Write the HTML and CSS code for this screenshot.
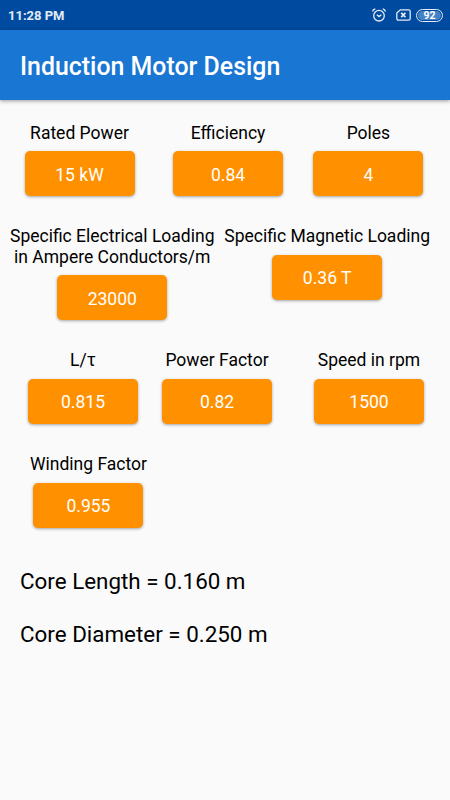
FILE: index.html
```html
<!DOCTYPE html>
<html lang="en">
<head>
  <meta charset="UTF-8">
  <meta name="viewport" content="width=device-width, initial-scale=1">
  <title>Induction Motor Design</title>
  <link rel="stylesheet" href="styles.css">
</head>
<body>
  <div class="status-bar">
    <span class="clock">11:28 PM</span>
    <div class="status-icons">
      <svg class="alarm" width="16" height="16" viewBox="0 0 16 16">
        <circle cx="8" cy="8.7" r="5.3"/>
        <path d="M5.800 7.700L8 9.600l2.400-1.900M1.500 4.500Q2 2.500 4.300 1.900M14.500 4.500Q14 2.500 11.700 1.900"/>
      </svg>
      <svg class="sim" width="15" height="12" viewBox="0 0 15 12">
        <path d="M4.300.8h8.300c.9 0 1.600.7 1.600 1.600v7.200c0 .9-.7 1.600-1.600 1.600H2.400c-.9 0-1.600-.7-1.600-1.600V4z"/>
        <path class="cross" d="M5.200 3.900l4.200 4.200M9.400 3.900L5.200 8.100"/>
      </svg>
      <span class="battery">92</span>
    </div>
  </div>
  <header class="app-bar">
    <h1>Induction Motor Design</h1>
  </header>
  <main>
    <div class="row row-basic">
      <div class="field"><label>Rated Power</label><button>15 kW</button></div>
      <div class="field"><label>Efficiency</label><button>0.84</button></div>
      <div class="field"><label>Poles</label><button>4</button></div>
    </div>
    <div class="row row-loading">
      <div class="field"><label>Specific Electrical Loading<br>in Ampere Conductors/m</label><button>23000</button></div>
      <div class="field"><label>Specific Magnetic Loading</label><button>0.36 T</button></div>
    </div>
    <div class="row row-factors">
      <div class="field"><label>L/τ</label><button>0.815</button></div>
      <div class="field"><label>Power Factor</label><button>0.82</button></div>
      <div class="field"><label>Speed in rpm</label><button>1500</button></div>
    </div>
    <div class="row row-winding">
      <div class="field"><label>Winding Factor</label><button>0.955</button></div>
    </div>
    <div class="results">
      <p>Core Length = 0.160 m</p>
      <p>Core Diameter = 0.250 m</p>
    </div>
  </main>
</body>
</html>
```
FILE: styles.css
```css
* {
  box-sizing: border-box;
}
body {
  margin: 0;
  height: 800px;
  overflow: hidden;
  background: #fafafa;
  color: #000;
  font-family: Roboto, sans-serif;
}
.status-bar {
  height: 30px;
  padding: 0 7px 0 8px;
  display: flex;
  align-items: center;
  justify-content: space-between;
  background: #004ba0;
  color: #e3ebf5;
}
.clock {
  font-size: 13px;
  font-weight: 700;
}
.status-icons {
  display: flex;
  align-items: center;
}
.status-icons svg {
  fill: none;
  stroke: #e3ebf5;
  stroke-width: 1.3;
}
.status-icons .cross {
  stroke-width: 1.7;
}
.sim {
  margin: 0 5px 0 9px;
}
.battery {
  width: 27px;
  height: 13px;
  padding: 1px;
  border: 1.5px solid #e3ebf5;
  border-radius: 7px;
  background: #4382c6 content-box;
  color: #fff;
  font-size: 10.5px;
  font-weight: 700;
  line-height: 9px;
  text-align: center;
}
.app-bar {
  height: 70px;
  padding-left: 20px;
  display: flex;
  align-items: center;
  background: #1976d2;
  color: #fff;
  box-shadow: 0 1px 4px rgba(0,0,0,0.4);
}
h1 {
  margin: 2px 0 0;
  font-size: 24.9px;
  font-weight: 500;
}
.row {
  display: flex;
  align-items: flex-start;
}
.field {
  display: flex;
  flex-direction: column;
  align-items: center;
}
label {
  font-size: 17.5px;
  line-height: 20.5px;
  text-align: center;
  white-space: nowrap;
}
button {
  width: 110px;
  height: 45px;
  margin-top: 7.9px;
  padding: 2px 0 0;
  border: 0;
  border-radius: 5px;
  background: #ff9100;
  color: #fff;
  font-family: inherit;
  font-size: 17.5px;
  box-shadow: 0 1px 3px rgba(0,0,0,0.35);
}
.row-basic {
  padding: 23px 0 0 24.5px;
}
.row-basic .field + .field {
  margin-left: 38.5px;
}
.row-basic .field:last-child {
  margin-left: 30.4px;
}
.row-loading {
  margin-top: 30.1px;
  padding: 0 20px 0 10px;
  justify-content: space-between;
}
.row-factors {
  margin-top: 30.1px;
  padding: 0 26px 0 28px;
  gap: 24px;
}
.row-factors .field:last-child {
  margin-left: auto;
}
.row-winding {
  margin-top: 30.6px;
  padding-left: 30px;
}
.results {
  margin: 40.6px 0 0 20px;
  font-size: 22.4px;
}
.results p {
  margin: 0 0 26px;
  line-height: 27px;
}
```
